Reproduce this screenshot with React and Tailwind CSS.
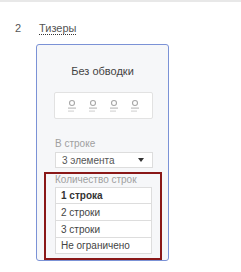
export default function App() {
	const rows = ["1 строка", "2 строки", "3 строки", "Не ограничено"];

	return (
		<div className="w-[241px] h-[272px] bg-white font-['Liberation_Sans',Arial,sans-serif] text-[#444] overflow-hidden">
			<div className="h-[2px] bg-[#e8e8e8]" />

			{/* Step header */}
			<div className="flex items-center mt-[19px] h-[14px] text-[11px]">
				<span className="ml-[15px] w-[24px] text-[#555]">2</span>
				<span className="border-b border-dotted border-[#333] leading-[12px] text-[#555]">Тизеры</span>
			</div>

			{/* Preview card */}
			<div className="ml-[36px] mt-[9px] w-[133px] h-[217px] border border-[#7b92d6] rounded-[3px] bg-[#f6f7f9] flex flex-col">
				<div className="text-center text-[11px] text-[#444] mt-[20px] leading-[13px]">Без обводки</div>

				<div className="ml-[17px] mt-[14px] w-[99px] h-[27px] bg-white border border-[#e2e2e2] rounded-[2px] flex items-center justify-center gap-[13px]">
					{[0, 1, 2, 3].map((i) => (
						<svg key={i} width="8" height="14" viewBox="0 0 8 14">
							<circle cx="4" cy="4" r="2.5" fill="none" stroke="#a8a8a8" strokeWidth="1.1" />
							<rect x="0" y="8.5" width="8" height="1.2" fill="#bdbdbd" />
							<rect x="0" y="11.5" width="6" height="1.2" fill="#d6d6d6" />
						</svg>
					))}
				</div>

				<div className="ml-[18px] mt-[19px] text-[10px] text-[#a0a0a0] leading-[12px]">В строке</div>
				<div className="ml-[18px] mt-[2px] w-[98px] h-[16px] bg-white border border-[#ddd] flex items-center justify-between pl-[6px] pr-[8px] text-[10px] text-[#555]">
					<span>3 элемента</span>
					<svg width="6" height="4" viewBox="0 0 6 4">
						<path d="M0 0 H6 L3 4 Z" fill="#333" />
					</svg>
				</div>

				{/* Highlighted row-count block */}
				<div className="ml-[7px] mt-[4px] w-[118px] border-2 border-[#8a1818] pl-[9px] pr-[8px] pt-0 pb-[4px]">
					<div className="text-[10px] text-[#a0a0a0] leading-[11px]">Количество строк</div>
					<div className="mt-[2px] bg-white border border-[#ddd]">
						{rows.map((r, i) => (
							<div
								key={r}
								className={`flex items-center px-[5px] text-[10px] ${i === 0 ? "h-[15px] font-bold text-[#333]" : "border-t border-[#ddd]"} ${i === 1 || i === 2 ? "h-[17px]" : ""} ${i === 3 ? "h-[16px]" : ""}`}>
								{r}
							</div>
						))}
					</div>
				</div>
			</div>
		</div>
	);
}
